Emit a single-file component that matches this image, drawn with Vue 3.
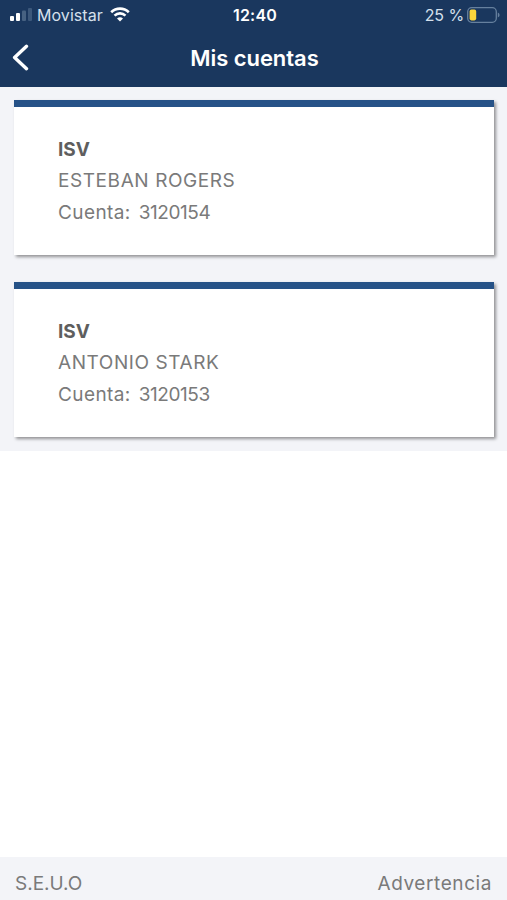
<template>
  <div class="app">
    <header class="app-header">
      <div class="status">
        <div class="carrier">
          <svg class="signal" viewBox="0 0 22 13" width="22" height="13">
            <rect x="0" y="8" width="4" height="5" rx="1" fill="#fff" />
            <rect x="6" y="5" width="4" height="8" rx="1" fill="#fff" />
            <rect x="12" y="2.5" width="4" height="10.5" rx="1" fill="#476282" />
            <rect x="18" y="0" width="4" height="13" rx="1" fill="#3c587b" />
          </svg>
          <span class="carrier-name">Movistar</span>
          <svg class="wifi" viewBox="0 0 20 15" width="20" height="15">
            <path d="M1.2 5.2 A12.6 12.6 0 0 1 18.8 5.2" />
            <path d="M4.5 8.6 A8 8 0 0 1 15.5 8.6" />
            <path class="wifi-dot" d="M10 14.6 L7 11.6 A4.3 4.3 0 0 1 13 11.6 Z" />
          </svg>
        </div>
        <span class="time">12:40</span>
        <div class="battery">
          <span class="percent">25 %</span>
          <svg viewBox="0 0 33 16" width="33" height="16">
            <rect x="0.7" y="0.7" width="28.6" height="14.6" rx="4" fill="none" stroke="#66809e" stroke-width="1.3" />
            <rect x="2.6" y="2.6" width="6.6" height="10.8" rx="1.8" fill="#fcd63c" />
            <path d="M30.8 5.4 Q32.6 6.2 32.6 8 Q32.6 9.8 30.8 10.6 Z" fill="#66809e" />
          </svg>
        </div>
      </div>
      <div class="nav">
        <button class="back" aria-label="Volver">
          <svg viewBox="0 0 17 27" width="17" height="27">
            <path d="M14.5 2.3 L2.6 13.5 L14.5 24.7" />
          </svg>
        </button>
        <h1 class="title">Mis cuentas</h1>
      </div>
    </header>

    <main class="accounts">
      <article v-for="c in cuentas" :key="c.numero" class="card">
        <div class="bank">{{ c.tipo }}</div>
        <div class="holder">{{ c.titular }}</div>
        <div class="account">
          <span class="label">Cuenta:</span>
          <span class="number">{{ c.numero }}</span>
        </div>
      </article>
    </main>

    <footer class="app-footer">
      <span class="seuo">S.E.U.O</span>
      <span class="warning">Advertencia</span>
    </footer>
  </div>
</template>

<script setup>
import { ref } from 'vue';

const cuentas = ref([
  { tipo: 'ISV', titular: 'ESTEBAN ROGERS', numero: '3120154' },
  { tipo: 'ISV', titular: 'ANTONIO STARK', numero: '3120153' }
]);
</script>

<style>
body { background: #fff; }
</style>

<style scoped>
.app { height: 100vh; display: flex; flex-direction: column; overflow: hidden; font-family: Inter, "Liberation Sans", sans-serif; color: #7a7a7a; }
.app-header { flex: none; height: 87px; background: #1a375e; color: #fff; }
.status { display: grid; grid-template-columns: 1fr auto 1fr; align-items: center; height: 29px; padding: 0 7px 0 10px; }
.carrier { display: flex; align-items: center; color: #d5e0ec; }
.carrier-name { font-size: 16px; letter-spacing: 0.05px; margin-left: 5px; }
.wifi { margin-left: 7px; fill: none; stroke: #fff; stroke-width: 2.6; }
.wifi .wifi-dot { fill: #fff; stroke: none; }
.time { font-size: 16px; font-weight: 600; letter-spacing: 0.2px; }
.battery { display: flex; align-items: center; justify-content: flex-end; gap: 3px; }
.percent { font-size: 16px; letter-spacing: -0.1px; color: #d5e0ec; }
.nav { display: grid; grid-template-columns: 60px 1fr 60px; align-items: center; height: 57px; }
.back { display: flex; padding: 0 0 0 12px; border: 0; background: none; }
.back path { fill: none; stroke: #fff; stroke-width: 3.4; stroke-linecap: round; stroke-linejoin: round; }
.title { margin: 0; padding-left: 2px; font-size: 22px; font-weight: 600; letter-spacing: -0.05px; text-align: center; }
.accounts { flex: none; display: flex; flex-direction: column; gap: 27px; padding: 13px 13px 14px 14px; background: #f3f4f8; }
.card { box-sizing: border-box; height: 155px; padding: 26.6px 44px 0; border-top: 7px solid #265287; background: #fff; box-shadow: 2px 2px 3px rgba(0, 0, 0, 0.4); font-size: 19px; line-height: 31.8px; }
.bank { font-weight: 700; color: #5e5e5e; }
.holder { letter-spacing: 0.58px; }
.account { display: flex; gap: 8px; }
.label { letter-spacing: 0.4px; }
.number { letter-spacing: -0.42px; }
.app-footer { flex: none; display: flex; justify-content: space-between; align-items: center; box-sizing: border-box; height: 43px; margin-top: auto; padding: 9px 15px 0; background: #f3f4f8; font-size: 19px; }
.warning { letter-spacing: 0.58px; }
</style>
